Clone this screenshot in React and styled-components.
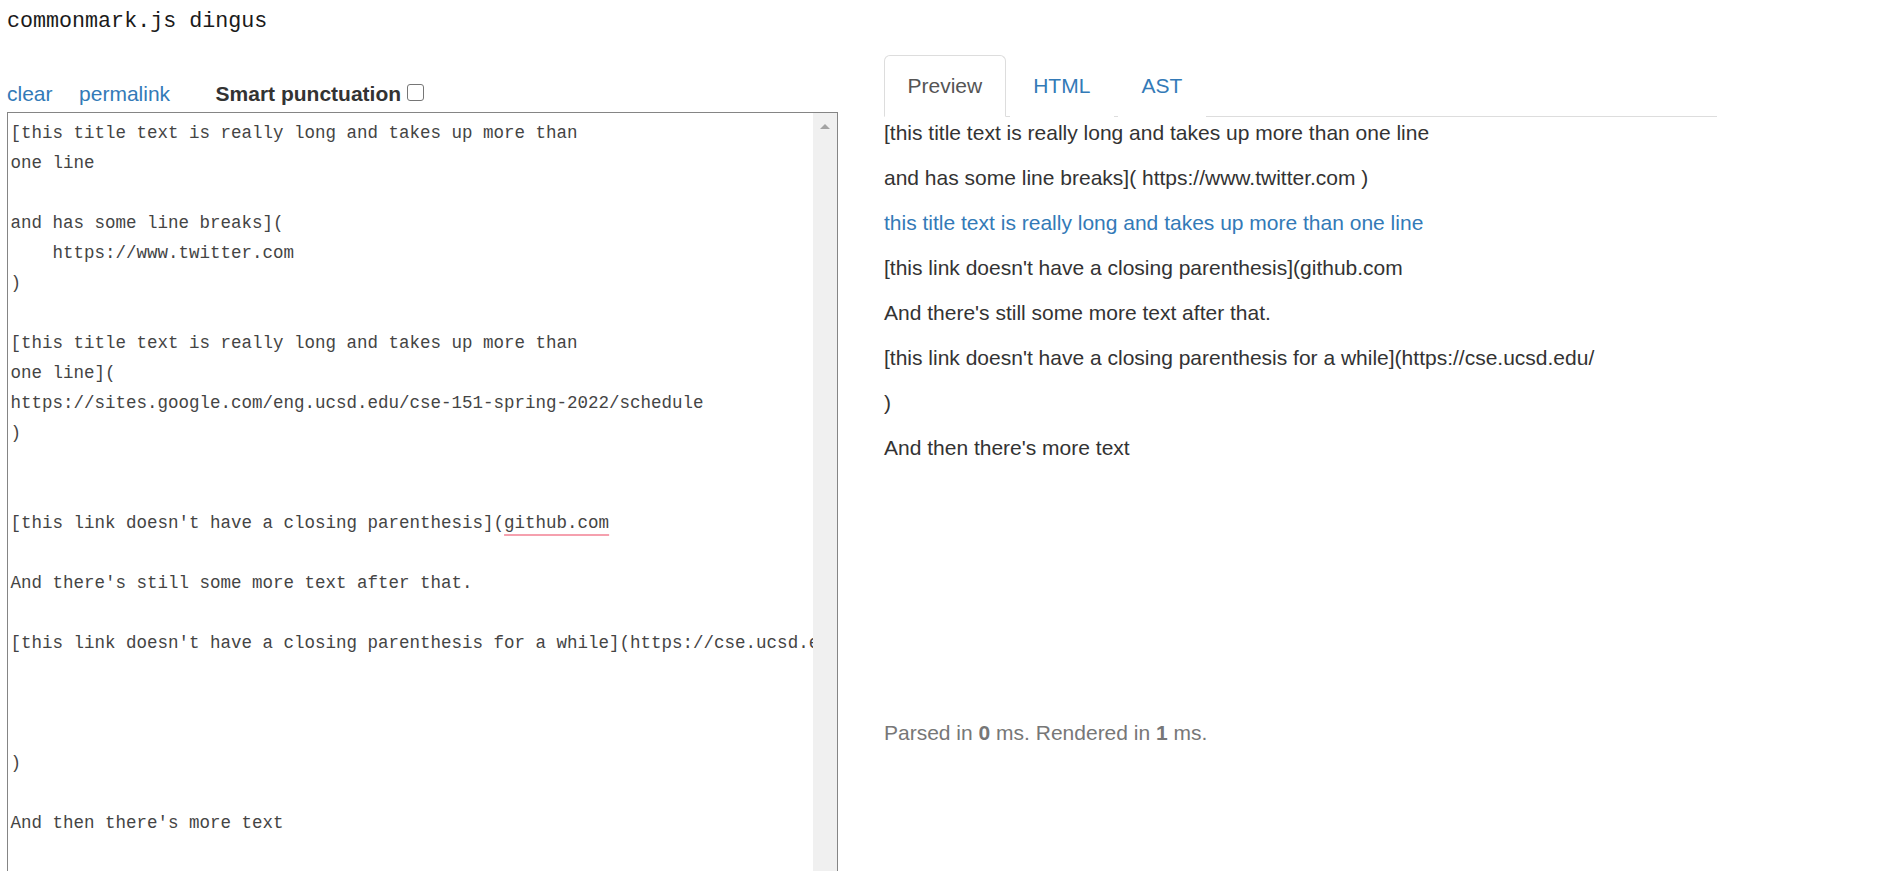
import React from 'react';
import styled, { createGlobalStyle } from 'styled-components';

const GlobalStyle = createGlobalStyle`
  html, body {
    margin: 0;
    padding: 0;
    overflow: hidden;
    background: #fff;
  }
  body {
    font-family: "Liberation Sans", Arial, sans-serif;
    font-size: 21px;
    line-height: 30px;
    color: #333;
  }
`;

const Page = styled.div`
  padding-left: 7px;
  width: 1710px;
`;

const Title = styled.h1`
  margin: 0;
  height: 55px;
  box-sizing: border-box;
  padding-top: 7px;
  font-family: "Liberation Mono", "Courier New", monospace;
  font-size: 21.7px;
  font-weight: normal;
  line-height: 30px;
  color: #1a1a1a;
`;

const Row = styled.div`
  display: flex;
  align-items: flex-start;
  gap: 46px;
`;

const LeftCol = styled.div`
  width: 831px;
  display: flex;
  flex-direction: column;
`;

const RightCol = styled.div`
  width: 833px;
  display: flex;
  flex-direction: column;
`;

const Toolbar = styled.div`
  display: flex;
  align-items: center;
  height: 30px;
  margin-top: 24px;
  margin-bottom: 3px;
`;

const ToolLink = styled.a`
  color: #337ab7;
  text-decoration: none;
  margin-right: ${props => props.$space}px;
  cursor: pointer;
`;

const SmartLabel = styled.label`
  display: flex;
  align-items: center;
  font-weight: bold;
  color: #333;
`;

const Check = styled.input`
  appearance: none;
  width: 17px;
  height: 17px;
  margin: 0 0 4px 6px;
  box-sizing: border-box;
  border: 1.5px solid #767676;
  border-radius: 3px;
  background: #fff;
`;

const Editor = styled.div`
  display: flex;
  height: 771px;
  border: 1px solid #858585;
  background: #fff;
`;

const EditorText = styled.div`
  flex: 1;
  overflow: hidden;
  padding: 5px 0 0 2.5px;
  white-space: pre;
  font-family: "Liberation Mono", "Courier New", monospace;
  font-size: 17.5px;
  line-height: 30px;
  color: #444;
`;

const Misspelled = styled.span`
  text-decoration: underline;
  text-decoration-color: #f5a0ae;
  text-decoration-thickness: 2px;
  text-underline-offset: 6px;
`;

const ScrollTrack = styled.div`
  width: 24px;
  background: #f0f0f0;
  display: flex;
  justify-content: center;
  padding-top: 11px;
  box-sizing: border-box;
`;

const UpArrow = styled.div`
  width: 0;
  height: 0;
  border-left: 5.5px solid transparent;
  border-right: 5.5px solid transparent;
  border-bottom: 5.5px solid #a3a3a3;
`;

const Tabs = styled.ul`
  display: flex;
  margin: 0;
  padding: 0;
  list-style: none;
  border-bottom: 1px solid #ddd;
`;

const Tab = styled.li`
  margin-bottom: -1px;
  margin-right: 4px;
  padding: 15px 22.5px;
  line-height: 30px;
  border: 1px solid ${props => (props.$active ? '#ddd' : 'transparent')};
  border-bottom-color: transparent;
  border-radius: 6px 6px 0 0;
  background: #fff;
  color: ${props => (props.$active ? '#555' : '#337ab7')};
  cursor: pointer;
`;

const Preview = styled.div`
  height: 600px;
  padding-top: 1px;
`;

const Para = styled.p`
  margin: 0 0 15px;
  color: #333;
`;

const PreviewLink = styled.a`
  color: #337ab7;
  text-decoration: none;
`;

const Timing = styled.p`
  margin: 0;
  color: #777;
`;

const beforeSpell = `[this title text is really long and takes up more than
one line

and has some line breaks](
    https://www.twitter.com
)

[this title text is really long and takes up more than
one line](
https://sites.google.com/eng.ucsd.edu/cse-151-spring-2022/schedule
)


[this link doesn't have a closing parenthesis](`;

const afterSpell = `

And there's still some more text after that.

[this link doesn't have a closing parenthesis for a while](https://cse.ucsd.edu/



)

And then there's more text
`;

const tabs = ['Preview', 'HTML', 'AST'];

const App = () => {
  return (
    <Page>
      <GlobalStyle />
      <Title>commonmark.js dingus</Title>
      <Row>
        <LeftCol>
          <Toolbar>
            <ToolLink $space={26.5}>clear</ToolLink>
            <ToolLink $space={45.5}>permalink</ToolLink>
            <SmartLabel>
              Smart punctuation
              <Check type="checkbox" />
            </SmartLabel>
          </Toolbar>
          <Editor>
            <EditorText>
              {beforeSpell}
              <Misspelled>github.com</Misspelled>
              {afterSpell}
            </EditorText>
            <ScrollTrack>
              <UpArrow />
            </ScrollTrack>
          </Editor>
        </LeftCol>

        <RightCol>
          <Tabs>
            {tabs.map((t, i) => (
              <Tab key={t} $active={i === 0}>{t}</Tab>
            ))}
          </Tabs>
          <Preview>
            <Para>[this title text is really long and takes up more than one line</Para>
            <Para>and has some line breaks]( https://www.twitter.com )</Para>
            <Para>
              <PreviewLink>this title text is really long and takes up more than one line</PreviewLink>
            </Para>
            <Para>[this link doesn't have a closing parenthesis](github.com</Para>
            <Para>And there's still some more text after that.</Para>
            <Para>[this link doesn't have a closing parenthesis for a while](https://cse.ucsd.edu/</Para>
            <Para>)</Para>
            <Para>And then there's more text</Para>
          </Preview>
          <Timing>
            Parsed in <b>0</b> ms. Rendered in <b>1</b> ms.
          </Timing>
        </RightCol>
      </Row>
    </Page>
  );
};

export default App;
